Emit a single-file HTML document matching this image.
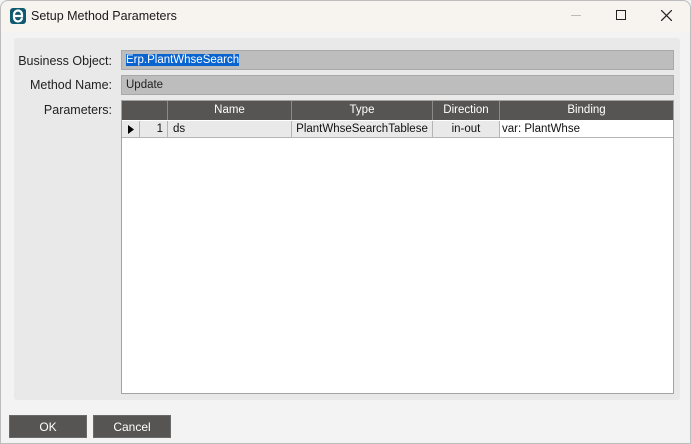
<!DOCTYPE html>
<html><head><meta charset="utf-8"><style>
*{margin:0;padding:0;box-sizing:border-box}
body{width:691px;height:444px;overflow:hidden;background:#f3f3f3;font-family:"Liberation Sans",sans-serif;position:relative;box-shadow:inset 0 0 0 1px #bdbdbd;border-radius:8px 8px 0 0}
.tb{position:absolute;left:1px;top:1px;width:689px;height:31px;background:#f7f3ee;border-radius:8px 8px 0 0}
.logo{position:absolute;left:9px;top:7px;width:16px;height:16px;background:#0f5a6e;border-radius:3px}
.title{position:absolute;left:30px;top:8px;font-size:12.5px;color:#1a1a1a}
.panel{position:absolute;left:14px;top:38px;width:666px;height:362px;background:#e9e9e9;border-radius:3px}
.lbl{position:absolute;font-size:12.5px;color:#222;text-align:right;width:104px;left:8px}
.box{position:absolute;left:121px;width:553px;height:20px;background:#bdbdbd;border:1px solid #a9a9a9;font-size:11.5px;padding:3px 4px;color:#222}
.grid{position:absolute;left:121px;top:100px;width:553px;height:294px;background:#fff;border:1px solid #a3a3a3}
.c{position:absolute;font-size:11.5px;height:19px;line-height:19px;text-align:center;border-right:1px solid #8a8a8a;color:#fff;background:#575553;top:0}
.r{position:absolute;font-size:11.5px;height:17px;line-height:17px;top:20px;background:#e9e9e9;border-right:1px solid #b5b5b5;border-bottom:1px solid #b5b5b5;color:#111}
.btn{position:absolute;top:415px;width:78px;height:23px;background:#575553;color:#fff;font-size:12px;text-align:center;line-height:23px;border:1px solid #6a6a6a}
</style></head><body>
<div class="tb"><div class="logo"><svg width="16" height="16" viewBox="0 0 16 16"><path d="M4 8H12V6.5A4 4 0 0 0 4 6.5V9.5A4 4 0 0 0 12 9.5" stroke="#fff" stroke-width="2.2" fill="none"/></svg></div>
<div class="title">Setup Method Parameters</div>
<div style="position:absolute;left:570px;top:14px;width:10px;height:1px;background:#bbb"></div>
<div style="position:absolute;left:615px;top:9px;width:10px;height:10px;border:1px solid #222"></div>
<svg style="position:absolute;left:660px;top:9px" width="11" height="11"><path d="M0 0L11 11M11 0L0 11" stroke="#222" stroke-width="1.2"/></svg>
</div>
<div class="panel"></div>
<div class="lbl" style="top:54px">Business Object:</div>
<div class="lbl" style="top:78px">Method Name:</div>
<div class="lbl" style="top:103px">Parameters:</div>
<div class="box" style="top:50px"><span style="background:#0a64d0;color:#fff">Erp.PlantWhseSearch</span></div>
<div class="box" style="top:75px">Update</div>
<div class="grid">
<div class="c" style="left:0;width:46px"></div>
<div class="c" style="left:46px;width:124px">Name</div>
<div class="c" style="left:170px;width:141px">Type</div>
<div class="c" style="left:311px;width:67px">Direction</div>
<div class="c" style="left:378px;width:173px;border-right:none">Binding</div>
<div class="r" style="left:0;width:18px"><svg style="position:absolute;left:6px;top:4px" width="6" height="9"><path d="M0 0L6 4.5L0 9Z" fill="#000"/></svg></div>
<div class="r" style="left:18px;width:28px;text-align:right;padding-right:4px">1</div>
<div class="r" style="left:46px;width:124px;padding-left:5px">ds</div>
<div class="r" style="left:170px;width:141px;text-align:center">PlantWhseSearchTablese</div>
<div class="r" style="left:311px;width:67px;text-align:center">in-out</div>
<div class="r" style="left:378px;width:173px;background:#fff;padding-left:2px;border-right:none">var: PlantWhse</div>
</div>
<div class="btn" style="left:9px">OK</div>
<div class="btn" style="left:93px">Cancel</div>
</body></html>
